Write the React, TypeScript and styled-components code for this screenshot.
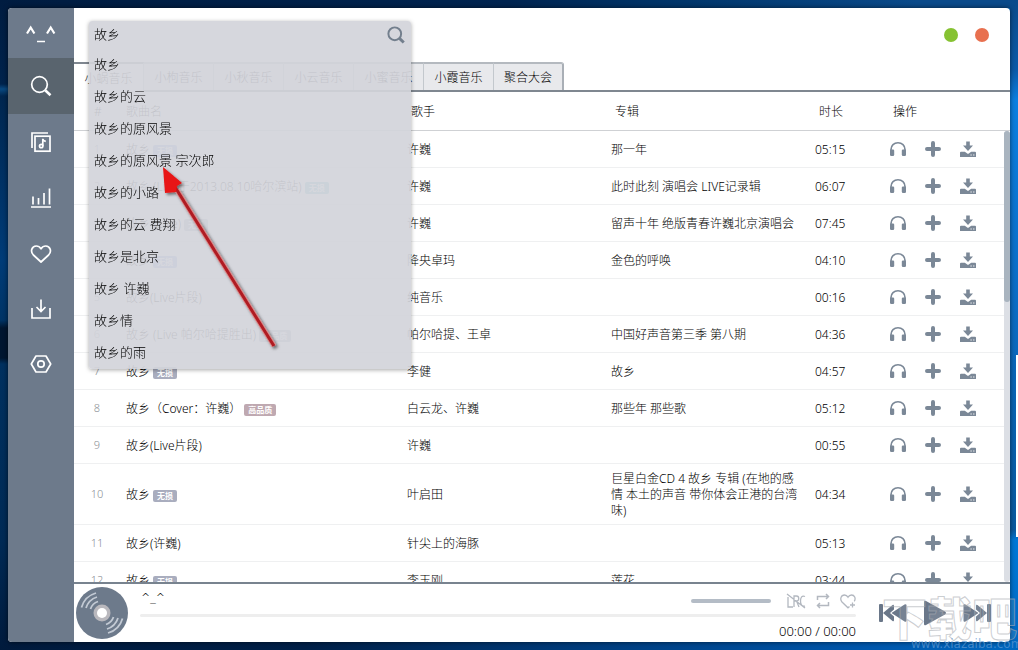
import React, { useState } from 'react';
import styled, { createGlobalStyle, css } from 'styled-components';

const slate = '#6d7a8b';
const iconGrey = '#7b8897';

const GlobalStyle = createGlobalStyle`
  *, *::before, *::after { box-sizing: border-box; }
  html, body { margin: 0; padding: 0; }
  body {
    font-family: "Noto Sans", "Noto Sans CJK SC", sans-serif;
    font-size: 12px;
    line-height: 16px;
    color: #000;
  }
  button, input { font: inherit; color: inherit; }
  button { border: 0; padding: 0; background: none; cursor: pointer; }
`;

const Desktop = styled.div`
  position: relative;
  display: flex;
  height: 100vh;
  min-height: 480px;
  padding: 8px;
  overflow: hidden;
  background:
    linear-gradient(#fff, #fff) right 355px / 2px 182px no-repeat,
    linear-gradient(180deg, #0a4a8a 0, #0a5aa8 70px, #0a7fe0 100px, #0a6cc4 300px, #0a5aa0 530px, #0078d7 540px, #0068c0 100%) right top / 8px 100% no-repeat,
    linear-gradient(180deg, #001c40 0, #00234c 84px, #0a4a82 89px, #00264f 96px, #003c78 260px, #003466 320px, #001630 328px, #001630 358px, #00305f 364px, #002a55 540px, #001a3c 100%) left top / 8px 100% no-repeat,
    linear-gradient(90deg, #001c40 0, #002450 50%, #003468 65%, #0a4a8a 90%, #0a4a8a 100%) left top / 100% 8px no-repeat,
    linear-gradient(90deg, #001a3c 0, #002048 30%, #003a78 55%, #0057ac 85%, #0068c0 100%);
`;

const Window = styled.div`
  display: flex;
  flex: 1;
  min-width: 0;
  border-radius: 4px;
  overflow: hidden;
  background: #fff;
  box-shadow: 0 0 5px rgba(0, 0, 0, 0.6);
`;

const Sidebar = styled.nav`
  display: flex;
  flex-direction: column;
  flex: none;
  width: 66px;
  background: ${slate};
`;

const Brand = styled.div`
  display: flex;
  align-items: center;
  justify-content: center;
  height: 50px;
  color: #fff;
`;

const NavButton = styled.button<{ $active?: boolean }>`
  display: flex;
  align-items: center;
  justify-content: center;
  height: 56px;
  color: #fff;
  background: ${(p) => (p.$active ? '#59646e' : 'transparent')};
`;

const Main = styled.main`
  display: flex;
  flex-direction: column;
  flex: 1;
  min-width: 0;
`;

const TopBar = styled.header`
  position: relative;
  display: flex;
  align-items: center;
  justify-content: flex-end;
  gap: 17px;
  height: 54px;
  flex: none;
  padding: 0 21px;
`;

const WindowDot = styled.button<{ $color: string }>`
  width: 14px;
  height: 14px;
  border-radius: 50%;
  background: ${(p) => p.$color};
`;

const SearchPanel = styled.form`
  position: absolute;
  z-index: 3;
  top: 13px;
  left: 15px;
  width: 322px;
  border-radius: 3px;
  background: rgba(211, 212, 218, 0.92);
  box-shadow: 0 1px 4px rgba(0, 0, 0, 0.35);
  color: #000;
`;

const SearchRow = styled.div`
  display: flex;
  align-items: center;
  height: 28px;
  padding: 0 6px 0 5px;
`;

const SearchInput = styled.input`
  flex: 1;
  min-width: 0;
  height: 28px;
  padding: 0 0 4px;
  border: 0;
  outline: 0;
  background: none;
  font-size: 13px;
  font-weight: 300;
`;

const SearchButton = styled.button`
  display: flex;
  color: #737f8d;
`;

const Suggestions = styled.ul`
  margin: 0;
  padding: 0;
  list-style: none;
`;

const Suggestion = styled.li`
  height: 32px;
  padding: 0 5px;
  font-size: 13px;
  font-weight: 300;
  line-height: 31px;
`;

const Tabs = styled.div`
  display: flex;
  flex: none;
  height: 30px;
  border-bottom: 2px solid #7f8790;
`;

const Tab = styled.button<{ $active?: boolean }>`
  width: 70px;
  height: 28px;
  padding-top: 1px;
  border-top: 2px solid #b4b9bf;
  border-right: 1px solid #c3c8cd;
  background: #e8e9ec;
  font-weight: 300;
  &:last-child {
    border-right: 2px solid #a9afb6;
    border-top-right-radius: 3px;
  }
  ${(p) =>
    p.$active &&
    css`
      height: 30px;
      background: #fff;
      border-top-color: #7f8790;
    `}
`;

const ListArea = styled.section`
  position: relative;
  flex: 1;
  min-height: 0;
`;

const Scroller = styled.div`
  height: 100%;
  overflow-y: auto;
  scrollbar-width: none;
`;

const Table = styled.table`
  width: 100%;
  table-layout: fixed;
  border-collapse: separate;
  border-spacing: 0;
  font-weight: 300;
`;

const HeadCell = styled.th<{ $indent: number }>`
  position: sticky;
  top: 0;
  height: 39px;
  padding: 2px 0 0 ${(p) => p.$indent}px;
  border-bottom: 1px solid #cfd1d4;
  background: #fff;
  font-weight: 300;
  text-align: left;
`;

const Cell = styled.td`
  height: 37px;
  padding: 7px 6px 5px;
  border-bottom: 1px solid #eff0f1;
  vertical-align: middle;
`;

const IndexCell = styled(Cell)`
  padding: 6px 0;
  color: #8b8f95;
  font-size: 11px;
  text-align: center;
`;

const ActionCell = styled(Cell)`
  padding: 6px;
`;

const SongName = styled.div`
  display: flex;
  align-items: center;
  gap: 3px;
  white-space: nowrap;
`;

const badgeColors = { lossless: '#a9adbe', high: '#bfa9b1', mv: '#6fc0c4', blue: '#8fa6dc' };
type BadgeKind = keyof typeof badgeColors;

const Badge = styled.span<{ $kind: BadgeKind }>`
  height: 12px;
  margin-top: 2px;
  padding: 0 4px;
  border-radius: 2px;
  background: ${(p) => badgeColors[p.$kind]};
  color: #fff;
  font-size: 8px;
  font-weight: 700;
  line-height: 12px;
`;

const Actions = styled.div`
  display: flex;
  gap: 17px;
  padding-left: 4px;
`;

const IconButton = styled.button`
  display: flex;
  color: ${iconGrey};
`;

const ScrollTrack = styled.div`
  position: absolute;
  top: 39px;
  right: 0;
  bottom: 0;
  width: 6px;
  border-radius: 3px;
  background: #dcdfe5;
`;

const ScrollThumb = styled.div`
  height: 38%;
  border-radius: 3px;
  background: #a9b4bf;
`;

const Player = styled.footer`
  display: flex;
  align-items: center;
  flex: none;
  height: 60px;
  padding: 0 19px 0 2px;
  border-top: 2px solid #78838f;
  font-weight: 300;
`;

const Track = styled.div`
  display: flex;
  flex-direction: column;
  flex: 1;
  min-width: 0;
  margin: 0 23px 0 12px;
`;

const TrackTop = styled.div`
  display: flex;
  align-items: center;
  gap: 9px;
  height: 26px;
`;

const TrackTitle = styled.span`
  flex: 1;
  padding: 0 1px 6px;
  font-family: "DejaVu Sans", sans-serif;
  font-size: 11px;
`;

const Range = styled.input<{ $thickness: number; $color: string }>`
  appearance: none;
  flex: none;
  width: 100%;
  height: ${(p) => p.$thickness}px;
  margin: 0;
  border-radius: 2px;
  background: ${(p) => p.$color};
  &::-webkit-slider-thumb {
    appearance: none;
    width: 0;
    height: 0;
  }
`;

const Volume = styled(Range)`
  width: 80px;
  margin-right: 6px;
`;

const MiniButton = styled.button`
  display: flex;
  color: #b3b8c0;
`;

const Time = styled.span`
  padding-top: 6px;
  font-size: 13px;
  text-align: right;
`;

const Transport = styled.div`
  display: flex;
  align-items: center;
  gap: 16px;
`;

const TransportButton = styled.button`
  display: flex;
  color: #6a7789;
`;

const Overlay = styled.svg`
  position: absolute;
  z-index: 4;
  pointer-events: none;
`;

const Arrow = styled(Overlay)`
  top: 160px;
  left: 155px;
`;

const Watermark = styled(Overlay)`
  right: 0;
  bottom: 0;
`;

const HeadphonesIcon = () => (
  <svg width="18" height="16" viewBox="0 0 18 16" fill="currentColor">
    <path d="M2 10V8.500C2 4.500 5 1.800 9 1.800s7 2.700 7 6.700V10" fill="none" stroke="currentColor" strokeWidth="1.600" />
    <rect x="1" y="8.500" width="4.200" height="6.500" rx="1.200" />
    <rect x="12.800" y="8.500" width="4.200" height="6.500" rx="1.200" />
  </svg>
);

const PlusIcon = () => (
  <svg width="18" height="16" viewBox="0 0 18 16" stroke="currentColor" strokeWidth="4" strokeLinecap="round">
    <path d="M9 2v12M3 8h12" />
  </svg>
);

const SaveIcon = () => (
  <svg width="18" height="16" viewBox="0 0 18 16" fill="currentColor">
    <path d="M7.200 0.500h3.600v4h3.200L9 10 4 4.500h3.200z" />
    <path d="M2 10.800h3.800L9 13l3.200-2.200H16q1 0 1 1V16H1v-4.200q0-1 1-1z" />
    <path d="M11.500 14h1.200M14.200 14h1.200" stroke="#fff" strokeWidth="1" />
  </svg>
);

const Magnifier = ({ size, width }: { size: number; width: number }) => (
  <svg width={size} height={size} viewBox="0 0 22 22" fill="none" stroke="currentColor" strokeWidth={width}>
    <circle cx="9.500" cy="9.500" r="7.800" />
    <path d="M15.200 15.200l5.300 5" strokeWidth={width * 1.5} />
  </svg>
);

const navIcon = { width: 22, height: 22, viewBox: '0 0 22 22', fill: 'none', stroke: 'currentColor', strokeWidth: 1.7 };

const LibraryIcon = () => (
  <svg {...navIcon}>
    <path d="M2 17V2h16" />
    <rect x="5" y="5.200" width="15" height="15" />
    <path d="M12.800 14.800V7.800c.3 1.800 1.500 2.200 3 2.500" />
    <circle cx="11.200" cy="15" r="1.700" />
  </svg>
);

const ChartIcon = () => (
  <svg {...navIcon}>
    <path d="M1 20h20M3 17.500v-8M8.500 17.500v-6.500M14 17.500V6M19.500 17.500V1.500" />
  </svg>
);

const HeartIcon = () => (
  <svg {...navIcon}>
    <path d="M11 19L3.400 12C-.2 8.300 2 3 6.200 3 8.500 3 10 4.200 11 5.800 12 4.200 13.500 3 15.800 3 20 3 22.200 8.300 18.600 12z" strokeLinejoin="round" />
  </svg>
);

const InboxIcon = () => (
  <svg {...navIcon}>
    <path d="M2 9v10h18V9M11 .5V12M6.500 8l4.500 4.500L15.500 8" />
  </svg>
);

const SettingsIcon = () => (
  <svg {...navIcon}>
    <path d="M6 1h10l4.700 8L16 17H6L1.300 9z" strokeLinejoin="round" />
    <circle cx="11" cy="9" r="3.200" />
  </svg>
);

const FaceLogo = () => (
  <svg width="32" height="20" viewBox="0 0 32 20" fill="none" stroke="currentColor">
    <path d="M2 10.500L5.700 4.500 9.400 10.500M22 10.500l3.700-6 3.700 6" strokeWidth="2.200" />
    <path d="M12 18.500h8" strokeWidth="1.300" />
  </svg>
);

const DiscIcon = () => (
  <svg width="52" height="52" viewBox="0 0 52 52" fill="none">
    <circle cx="26" cy="26" r="26" fill={slate} />
    <g stroke="#c3cad4" strokeWidth="1.800">
      <path d="M5.500 20.500A21 21 0 0 1 20 6M10 21A17 17 0 0 1 21 10M14.500 22A12 12 0 0 1 22 14.500" />
      <path d="M46.500 31.500A21 21 0 0 1 32 46M42 31A17 17 0 0 1 31 42M37.500 30A12 12 0 0 1 30 37.500" />
    </g>
    <circle cx="26" cy="26" r="8.500" fill="#b9b8bd" />
    <circle cx="26" cy="26" r="5" fill="#fff" />
  </svg>
);

const LyricsIcon = () => (
  <svg width="20" height="16" viewBox="0 0 20 16" fill="none" stroke="currentColor" strokeWidth="1.300">
    <path d="M1 1l18 14M2 4v10h5M8 14V3h2.500c3 0 3 5 0 5H8M10.500 8l2.500 6M19 3.500c-3-1.500-4.500 1-4.500 4.500s1.500 6 4.500 5" />
  </svg>
);

const RepeatIcon = () => (
  <svg width="16" height="16" viewBox="0 0 16 16" fill="none" stroke="currentColor" strokeWidth="1.500">
    <path d="M2.500 7V3.500h11M11 1l2.500 2.500L11 6M13.500 9v3.500h-11M5 10l-2.500 2.500L5 15" />
  </svg>
);

const AddHeartIcon = () => (
  <svg width="16" height="16" viewBox="0 0 16 16" fill="none" stroke="currentColor" strokeWidth="1.300">
    <path d="M9.500 13.500L8 14.800 2 9C-.5 6 1.200 2 4.500 2 6.300 2 7.300 3 8 4.200 8.700 3 9.700 2 11.500 2c3 0 4.600 3.500 2.800 6.300M12.500 9.500v5M10 12h5" />
  </svg>
);

const SkipIcon = ({ forward }: { forward?: boolean }) => (
  <svg width="28" height="20" viewBox="0 0 28 20" fill="currentColor">
    <g transform={forward ? 'rotate(180 14 10)' : undefined}>
      <rect x="0" y="1" width="4" height="18" rx="1" />
      <path d="M4 10L13.500 2q1.500-1 1.500 1v3.500L11 10l4 3.500V17q0 2-1.500 1z" />
      <path d="M12.500 10L25.500 1.500q2-1 2 1v15q0 2-2 1z" />
    </g>
  </svg>
);

const PlayIcon = () => (
  <svg width="24" height="26" viewBox="0 0 24 26" fill="currentColor">
    <path d="M1 2q0-2 2-1l19 10.500q2 1.500 0 3L3 25q-2 1-2-1z" />
  </svg>
);

interface Song {
  name: string;
  singer: string;
  album?: string;
  time: string;
  badge?: [string, BadgeKind];
}

const songs: Song[] = [
  { name: '故乡', singer: '许巍', album: '那一年', time: '05:15', badge: ['无损', 'blue'] },
  { name: '故乡 (Live于2013.08.10哈尔滨站)', singer: '许巍', album: '此时此刻 演唱会 LIVE记录辑', time: '06:07', badge: ['无损', 'mv'] },
  { name: '故乡 (Live)', singer: '许巍', album: '留声十年 绝版青春许巍北京演唱会', time: '07:45', badge: ['无损', 'lossless'] },
  { name: '故乡', singer: '降央卓玛', album: '金色的呼唤', time: '04:10', badge: ['无损', 'blue'] },
  { name: '故乡(Live片段)', singer: '纯音乐', time: '00:16' },
  { name: '故乡 (Live 帕尔哈提胜出)', singer: '帕尔哈提、王卓', album: '中国好声音第三季 第八期', time: '04:36', badge: ['高品质', 'lossless'] },
  { name: '故乡', singer: '李健', album: '故乡', time: '04:57', badge: ['无损', 'lossless'] },
  { name: '故乡（Cover：许巍）', singer: '白云龙、许巍', album: '那些年 那些歌', time: '05:12', badge: ['高品质', 'high'] },
  { name: '故乡(Live片段)', singer: '许巍', time: '00:55' },
  { name: '故乡', singer: '叶启田', album: '巨星白金CD 4 故乡 专辑 (在地的感情 本土的声音 带你体会正港的台湾味)', time: '04:34', badge: ['无损', 'lossless'] },
  { name: '故乡(许巍)', singer: '针尖上的海豚', time: '05:13' },
  { name: '故乡', singer: '李玉刚', album: '莲花', time: '03:44', badge: ['无损', 'lossless'] },
];

const tabs = ['小蜗音乐', '小枸音乐', '小秋音乐', '小云音乐', '小蜜音乐', '小霞音乐', '聚合大会'];

const suggestions = ['故乡', '故乡的云', '故乡的原风景', '故乡的原风景 宗次郎', '故乡的小路', '故乡的云 费翔', '故乡是北京', '故乡 许巍', '故乡情', '故乡的雨'];

const navItems = [
  { label: '搜索', icon: <Magnifier size={22} width={1.7} /> },
  { label: '歌单', icon: <LibraryIcon /> },
  { label: '排行', icon: <ChartIcon /> },
  { label: '收藏', icon: <HeartIcon /> },
  { label: '下载', icon: <InboxIcon /> },
  { label: '设置', icon: <SettingsIcon /> },
];

const SongRow = ({ song, index }: { song: Song; index: number }) => (
  <tr>
    <IndexCell>{index}</IndexCell>
    <Cell>
      <SongName>
        {song.name}
        {song.badge && <Badge $kind={song.badge[1]}>{song.badge[0]}</Badge>}
      </SongName>
    </Cell>
    <Cell>{song.singer}</Cell>
    <Cell>{song.album}</Cell>
    <Cell>{song.time}</Cell>
    <ActionCell>
      <Actions>
        <IconButton aria-label="试听"><HeadphonesIcon /></IconButton>
        <IconButton aria-label="添加"><PlusIcon /></IconButton>
        <IconButton aria-label="下载"><SaveIcon /></IconButton>
      </Actions>
    </ActionCell>
  </tr>
);

export default function App() {
  const [query, setQuery] = useState('故乡');
  const [activeNav, setActiveNav] = useState(0);
  const [activeTab, setActiveTab] = useState(0);

  return (
    <>
      <GlobalStyle />
      <Desktop>
        <Window>
          <Sidebar>
            <Brand><FaceLogo /></Brand>
            {navItems.map((item, i) => (
              <NavButton key={item.label} aria-label={item.label} $active={i === activeNav} onClick={() => setActiveNav(i)}>
                {item.icon}
              </NavButton>
            ))}
          </Sidebar>
          <Main>
            <TopBar>
              <SearchPanel onSubmit={(e) => e.preventDefault()}>
                <SearchRow>
                  <SearchInput aria-label="搜索歌曲" value={query} onChange={(e) => setQuery(e.target.value)} />
                  <SearchButton type="submit" aria-label="搜索"><Magnifier size={18} width={2.4} /></SearchButton>
                </SearchRow>
                <Suggestions>
                  {suggestions.map((s) => (
                    <Suggestion key={s} onClick={() => setQuery(s)}>{s}</Suggestion>
                  ))}
                </Suggestions>
              </SearchPanel>
              <WindowDot $color="#86c232" aria-label="最小化" />
              <WindowDot $color="#e8704f" aria-label="关闭" />
            </TopBar>
            <Tabs>
              {tabs.map((t, i) => (
                <Tab key={t} $active={i === activeTab} onClick={() => setActiveTab(i)}>{t}</Tab>
              ))}
            </Tabs>
            <ListArea>
              <Scroller>
                <Table>
                  <colgroup>
                    <col style={{ width: 46 }} />
                    <col />
                    <col style={{ width: 204 }} />
                    <col style={{ width: 204 }} />
                    <col style={{ width: 70 }} />
                    <col style={{ width: 131 }} />
                  </colgroup>
                  <thead>
                    <tr>
                      <HeadCell $indent={20}>#</HeadCell>
                      <HeadCell $indent={6}>歌曲名</HeadCell>
                      <HeadCell $indent={10}>歌手</HeadCell>
                      <HeadCell $indent={10}>专辑</HeadCell>
                      <HeadCell $indent={10}>时长</HeadCell>
                      <HeadCell $indent={14}>操作</HeadCell>
                    </tr>
                  </thead>
                  <tbody>
                    {songs.map((song, i) => (
                      <SongRow key={i} song={song} index={i + 1} />
                    ))}
                  </tbody>
                </Table>
              </Scroller>
              <ScrollTrack><ScrollThumb /></ScrollTrack>
            </ListArea>
            <Player>
              <DiscIcon />
              <Track>
                <TrackTop>
                  <TrackTitle>^_^</TrackTitle>
                  <Volume type="range" aria-label="音量" $thickness={4} $color="#b4bcc6" />
                  <MiniButton aria-label="歌词"><LyricsIcon /></MiniButton>
                  <MiniButton aria-label="循环"><RepeatIcon /></MiniButton>
                  <MiniButton aria-label="收藏"><AddHeartIcon /></MiniButton>
                </TrackTop>
                <Range type="range" aria-label="进度" $thickness={3} $color="#eeeeee" />
                <Time>00:00 / 00:00</Time>
              </Track>
              <Transport>
                <TransportButton aria-label="上一首"><SkipIcon /></TransportButton>
                <TransportButton aria-label="播放"><PlayIcon /></TransportButton>
                <TransportButton aria-label="下一首"><SkipIcon forward /></TransportButton>
              </Transport>
            </Player>
          </Main>
        </Window>
        <Arrow width="130" height="200" viewBox="0 0 130 200" aria-hidden="true">
          <defs>
            <filter id="arrowShadow" x="-20%" y="-20%" width="150%" height="150%">
              <feDropShadow dx="2" dy="2" stdDeviation="1.500" floodColor="#000" floodOpacity="0.5" />
            </filter>
          </defs>
          <g filter="url(#arrowShadow)">
            <path d="M22 30L119 186" stroke="#d98a8a" strokeWidth="5" />
            <path d="M20 27L119 186" stroke="#b01a22" strokeWidth="3" />
            <path d="M8 7L27 23 22 26 21 32 10 33z" fill="#e81414" />
          </g>
        </Arrow>
        <Watermark width="140" height="64" viewBox="0 0 140 64" aria-hidden="true">
          <text x="4" y="50" fontSize="45" fontWeight="900" fontFamily='"Noto Sans CJK SC", sans-serif' fill="#fff" fillOpacity="0.1" stroke="#a9adb3" strokeOpacity="0.6" strokeWidth="1">下载吧</text>
          <text x="33" y="62" fontSize="12" fontFamily='"DejaVu Sans", sans-serif' fill="#5f9ad4" fillOpacity="0.7">www.xiazaiba.com</text>
        </Watermark>
      </Desktop>
    </>
  );
}
